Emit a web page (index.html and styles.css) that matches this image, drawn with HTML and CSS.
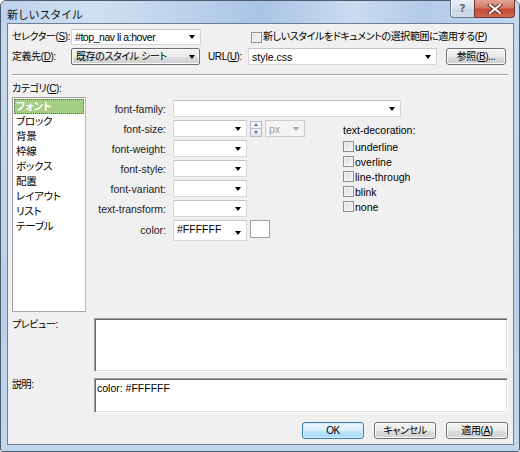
FILE: index.html
```html
<!DOCTYPE html>
<html lang="ja">
<head>
<meta charset="utf-8">
<title>新しいスタイル</title>
<link rel="stylesheet" href="styles.css">
</head>
<body>
<div class="window">
  <div class="titlebar">
    <span class="title">新しいスタイル</span>
    <div class="caption-btns">
      <span class="cap help">?</span>
      <span class="cap close"><svg width="16" height="10" viewBox="0 0 16 10"><path d="M3 1 L13 9 M13 1 L3 9" stroke="#5a2a22" stroke-width="4" stroke-linecap="square"/><path d="M3 1 L13 9 M13 1 L3 9" stroke="#ffffff" stroke-width="2" stroke-linecap="square"/></svg></span>
    </div>
  </div>
  <div class="client">
    <div class="row row1">
      <span class="lbl w-lbl">セレクター(<u>S</u>):</span>
      <div class="combo w-sel"><span class="val sel-val">#top_nav li a:hover</span><span class="arrow"></span></div>
      <span class="chk apply-chk"></span>
      <span class="chk-lbl">新しいスタイルをドキュメントの選択範囲に適用する(<u>P</u>)</span>
    </div>
    <div class="row row2">
      <span class="lbl w-lbl">定義先(<u>D</u>):</span>
      <div class="dropbtn w-def"><span class="val">既存のスタイル シート</span><span class="arrow"></span></div>
      <span class="lbl url-lbl">URL(<u>U</u>):</span>
      <div class="combo w-url"><span class="val">style.css</span><span class="arrow"></span></div>
      <span class="btn browse">参照(<u>B</u>)...</span>
    </div>
    <div class="sep"></div>
    <div class="cat-lbl">カテゴリ(<u>C</u>):</div>
    <div class="main">
      <ul class="listbox">
        <li class="sel">フォント</li>
        <li>ブロック</li>
        <li>背景</li>
        <li>枠線</li>
        <li>ボックス</li>
        <li>配置</li>
        <li>レイアウト</li>
        <li>リスト</li>
        <li>テーブル</li>
      </ul>
      <div class="props">
        <span class="plbl">font-family:</span>
        <div class="combo ff"><span class="val"></span><span class="arrow"></span></div>

        <span class="plbl">font-size:</span>
        <div class="fs-group">
          <div class="combo small"><span class="val"></span><span class="arrow"></span></div>
          <div class="spin"><span class="spin-up"></span><span class="spin-down"></span></div>
          <div class="combo unit disabled"><span class="val">px</span><span class="arrow"></span></div>
        </div>

        <div class="deco">
          <div class="deco-lbl">text-decoration:</div>
          <div class="deco-item"><span class="chk"></span><span>underline</span></div>
          <div class="deco-item"><span class="chk"></span><span>overline</span></div>
          <div class="deco-item"><span class="chk"></span><span>line-through</span></div>
          <div class="deco-item"><span class="chk"></span><span>blink</span></div>
          <div class="deco-item"><span class="chk"></span><span>none</span></div>
        </div>

        <span class="plbl">font-weight:</span>
        <div class="combo small"><span class="val"></span><span class="arrow"></span></div>

        <span class="plbl">font-style:</span>
        <div class="combo small"><span class="val"></span><span class="arrow"></span></div>

        <span class="plbl">font-variant:</span>
        <div class="combo small"><span class="val"></span><span class="arrow"></span></div>

        <span class="plbl">text-transform:</span>
        <div class="combo small"><span class="val"></span><span class="arrow"></span></div>

        <span class="plbl color-lbl">color:</span>
        <div class="color-group">
          <div class="combo small color-combo"><span class="val">#FFFFFF</span><span class="arrow"></span></div>
          <span class="swatch"></span>
        </div>
      </div>
    </div>
    <div class="box-row preview-row">
      <span class="box-lbl">プレビュー:</span>
      <div class="sunken preview"></div>
    </div>
    <div class="box-row desc-row">
      <span class="box-lbl">説明:</span>
      <div class="sunken desc">color: #FFFFFF</div>
    </div>
    <div class="buttons">
      <span class="btn ok">OK</span>
      <span class="btn">キャンセル</span>
      <span class="btn">適用(<u>A</u>)</span>
    </div>
  </div>
</div>
</body>
</html>
```
FILE: styles.css
```css
* { box-sizing: border-box; }
html, body { margin: 0; padding: 0; }
body {
  width: 520px;
  height: 452px;
  overflow: hidden;
  background: #ffffff;
  font-family: "Liberation Sans", "Noto Sans CJK JP", sans-serif;
  font-size: 10.5px;
  line-height: 12px;
  color: #000;
  font-feature-settings: "palt";
}
u { text-decoration: underline; }

.window {
  width: 520px;
  height: 452px;
  border: 1px solid #4f5c6c;
  border-radius: 6px 6px 3px 3px;
  background: linear-gradient(180deg, #bcd2ec 0px, #c6daf0 40px, #bad0ea 300px, #c2d6ee 452px);
  display: flex;
  flex-direction: column;
}

.titlebar {
  height: 22px;
  display: flex;
  justify-content: space-between;
  align-items: flex-start;
  border-radius: 5px 5px 0 0;
  background: linear-gradient(90deg, #bdd3ed 0%, #cfe0f3 18%, #bcd3ed 35%, #a9c4e5 50%, #c9dcf1 68%, #b2cbe9 82%, #c4d8ef 100%);
}
.title {
  font-family: "Noto Sans CJK JP", sans-serif;
  font-feature-settings: normal;
  font-size: 11px;
  line-height: 14px;
  margin: 6px 0 0 6px;
  color: #111;
  letter-spacing: -0.2px;
}
.caption-btns {
  display: flex;
  margin: -1px 4px 0 0;
}
.cap {
  height: 18px;
  display: flex;
  align-items: center;
  justify-content: center;
}
.help {
  width: 24px;
  border: 1px solid #6a7687;
  border-top: 0;
  border-right: 0;
  border-radius: 0 0 0 4px;
  background: linear-gradient(180deg, #e9eef5 0%, #d9e2ed 50%, #c6d2e1 51%, #d2dcea 100%);
  color: #5d6775;
  font-family: "DejaVu Sans", sans-serif;
  font-weight: bold;
  font-size: 11px;
  box-shadow: inset 1px 0 #f4f7fb;
}
.close {
  width: 41px;
  border: 1px solid #6a3a33;
  border-top: 0;
  border-radius: 0 0 4px 0;
  background: linear-gradient(180deg, #e3a394 0%, #d47a66 45%, #c54a33 55%, #cf6650 100%);
}

.client {
  flex: 1;
  margin: 0 5px 6px 6px;
  border: 1px solid #6d7f96;
  background: #f0f0f0;
  padding: 5px 5px 0 4px;
  display: flex;
  flex-direction: column;
}

/* Japanese text is rendered slightly narrower, like the original UI font */
.lbl, .chk-lbl, .dropbtn .val, .btn, .cat-lbl, .box-lbl {
  font-size: 10px;
  letter-spacing: -0.4px;
}

.row { display: flex; align-items: center; }
.row1 { height: 16px; }
.row2 { height: 17px; margin-top: 3px; }
.lbl { white-space: nowrap; }
.w-lbl { width: 59px; flex: none; }
.url-lbl { width: 40px; margin-left: 8px; flex: none; }

.combo {
  display: flex;
  align-items: center;
  justify-content: space-between;
  background: #fff;
  border: 1px solid #d6d6d6;
  border-top-color: #c6c6c6;
  padding: 0 5px 0 3px;
  height: 17px;
  white-space: nowrap;
  flex: none;
}
.row1 .combo { height: 16px; }
.w-sel { width: 130px; }
.sel-val { letter-spacing: -0.45px; }
.w-url { width: 189px; }
.arrow {
  width: 0;
  height: 0;
  border-left: 3.5px solid transparent;
  border-right: 3.5px solid transparent;
  border-top: 4px solid #000;
  flex: none;
}

.dropbtn {
  display: flex;
  align-items: center;
  justify-content: space-between;
  width: 129px;
  height: 17px;
  padding: 0 4px 0 4px;
  border: 1px solid #707070;
  border-radius: 2px;
  background: linear-gradient(180deg, #f2f2f2 0%, #ebebeb 50%, #dddddd 51%, #cfcfcf 100%);
  box-shadow: inset 0 0 0 1px #fbfbfb;
  white-space: nowrap;
  flex: none;
}

.chk {
  width: 11px;
  height: 11px;
  border: 1px solid #8e8f8f;
  background: linear-gradient(135deg, #d8d8d8 0%, #eeeeee 60%, #f8f8f8 100%);
  box-shadow: inset 0 0 0 1px #f4f4f4;
  flex: none;
}
.apply-chk { margin-left: 50px; }
.chk-lbl { margin-left: 1px; white-space: nowrap; }

.btn {
  display: flex;
  align-items: center;
  justify-content: center;
  height: 17px;
  border: 1px solid #707070;
  border-radius: 3px;
  background: linear-gradient(180deg, #f2f2f2 0%, #ebebeb 50%, #dddddd 51%, #cfcfcf 100%);
  box-shadow: inset 0 0 0 1px #fcfcfc;
  white-space: nowrap;
}
.browse { width: 60px; margin-left: 9px; }

.sep {
  margin-top: 9px;
  height: 2px;
  border-top: 1px solid #a0a0a0;
  border-bottom: 1px solid #ffffff;
}

.cat-lbl { margin-top: 7px; height: 12px; }

.main {
  margin-top: 2px;
  display: flex;
  height: 215px;
}
.listbox {
  list-style: none;
  margin: 0;
  padding: 1px;
  width: 74px;
  height: 215px;
  background: #fff;
  border: 1px solid #a0a0a0;
  border-right-color: #b9b9b9;
  border-bottom-color: #a8a8a8;
}
.listbox li {
  height: 15px;
  line-height: 14px;
  padding-left: 2px;
  font-size: 10.5px;
  letter-spacing: -0.2px;
  font-family: "Noto Sans CJK JP", sans-serif;
}
.listbox li.sel {
  background: #a3cd82;
  color: #fff;
  font-weight: bold;
  outline: 1px dotted #5c6a4e;
  outline-offset: -1px;
}

.props {
  display: grid;
  grid-template-columns: 87px 170px auto;
  grid-template-rows: repeat(6, 17px) 21px;
  row-gap: 3px;
  padding-top: 3px;
  align-content: start;
}
.plbl {
  grid-column: 1;
  text-align: right;
  padding-right: 7px;
  align-self: center;
  white-space: nowrap;
  color: #1a1a1a;
}
.ff { grid-column: 2 / span 2; width: 228px; }
.small { width: 74px; }
.fs-group { display: flex; align-items: center; }
.spin {
  width: 12px;
  height: 16px;
  margin-left: 3px;
  display: flex;
  flex-direction: column;
  border: 1px solid #b4b9c2;
  background: linear-gradient(180deg, #f6f7f9, #e2e6ec);
}
.spin-up, .spin-down {
  flex: 1;
  display: flex;
  align-items: center;
  justify-content: center;
}
.spin-up { border-bottom: 1px solid #c4c9d1; }
.spin-up::after {
  content: "";
  border-left: 2.5px solid transparent;
  border-right: 2.5px solid transparent;
  border-bottom: 3px solid #5676a8;
}
.spin-down::after {
  content: "";
  border-left: 2.5px solid transparent;
  border-right: 2.5px solid transparent;
  border-top: 3px solid #5676a8;
}
.unit {
  width: 40px;
  margin-left: 3px;
  background: #f4f4f4;
  border-color: #cbcbcb;
  color: #9b9b9b;
}
.unit .arrow { border-top-color: #a8a8a8; }

.deco {
  grid-column: 3;
  grid-row: 2 / span 6;
  padding-top: 4px;
}
.deco-lbl { height: 15px; }
.deco-item {
  display: flex;
  align-items: center;
  height: 15px;
  gap: 1px;
  white-space: nowrap;
}

.color-lbl { align-self: start; padding-top: 4px; }
.color-group { display: flex; align-items: flex-start; }
.color-combo {
  height: 21px;
  align-items: flex-start;
  padding-top: 2px;
}
.color-combo .arrow { margin-top: 8px; }
.swatch {
  width: 20px;
  height: 18px;
  margin-left: 3px;
  background: #fff;
  border: 1px solid #9e9e9e;
}

.box-row { display: flex; }
.box-lbl { width: 82px; flex: none; padding-top: 1px; }
.sunken {
  flex: 1;
  background: #fff;
  border-top: 1px solid #a0a0a0;
  border-left: 1px solid #a0a0a0;
  border-bottom: 1px solid #ffffff;
  border-right: 1px solid #ffffff;
  box-shadow: inset 1px 1px #696969, inset -1px -1px #e3e3e3;
}
.preview-row { margin-top: 6px; height: 54px; }
.desc-row { margin-top: 6px; height: 35px; }
.desc { padding: 3px 0 0 2px; }

.buttons {
  margin-top: 9px;
  display: flex;
  justify-content: flex-end;
  gap: 10px;
}
.buttons .btn { width: 62px; }
.ok {
  border-color: #3c7fb1;
  background: linear-gradient(180deg, #eaf6fd 0%, #d9f0fc 50%, #bee6fd 51%, #a7d9f5 100%);
  box-shadow: inset 0 0 0 1px #d6f0fd;
}
```
